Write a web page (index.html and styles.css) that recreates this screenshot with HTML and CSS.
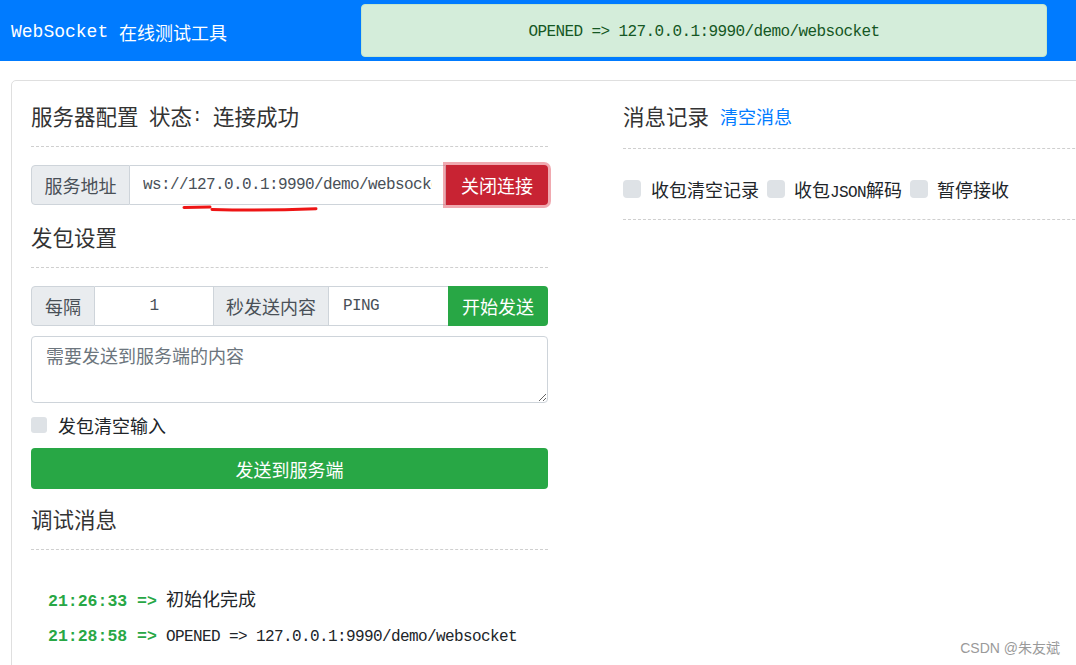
FILE: index.html
```html
<!DOCTYPE html>
<html lang="zh-CN">
<head>
<meta charset="utf-8">
<title>WebSocket 在线测试工具</title>
<link rel="stylesheet" href="styles.css">
</head>
<body>
<header class="topbar">
  <div class="brand"><span class="en">WebSocket </span>在线测试工具</div>
  <div class="alert"><span class="en">OPENED =&gt; 127.0.0.1:9990/demo/websocket</span></div>
</header>

<main class="card">
  <section class="col">
    <h5 class="sec-title">服务器配置<span class="hw"> </span>状态<span class="hw">: </span>连接成功</h5>
    <div class="group">
      <span class="addon w-addr">服务地址</span>
      <input class="field f-url" value="ws://127.0.0.1:9990/demo/websocket">
      <button class="btn btn-red">关闭连接</button>
    </div>

    <h5 class="sec-title">发包设置</h5>
    <div class="group">
      <span class="addon w-every">每隔</span>
      <input class="field f-num" value="1">
      <span class="addon w-sec">秒发送内容</span>
      <input class="field f-ping" value="PING">
      <button class="btn btn-green btn-start">开始发送</button>
    </div>
    <textarea class="msg" placeholder="需要发送到服务端的内容"></textarea>
    <div class="check-row">
      <span class="cb cb-sm"></span><span>发包清空输入</span>
    </div>
    <button class="btn btn-green btn-block">发送到服务端</button>

    <h5 class="sec-title sec-debug">调试消息</h5>
    <div class="log">
      <div class="log-line"><span class="en time">21:26:33 =&gt;</span><span class="en"> </span>初始化完成</div>
      <div class="log-line"><span class="en time">21:28:58 =&gt;</span><span class="en"> OPENED =&gt; 127.0.0.1:9990/demo/websocket</span></div>
    </div>
  </section>

  <section class="col">
    <h5 class="sec-title sec-right">消息记录<a class="link">清空消息</a></h5>
    <div class="checks">
      <span class="cb"></span><span class="lbl">收包清空记录</span>
      <span class="cb"></span><span class="lbl">收包<span class="en">JSON</span>解码</span>
      <span class="cb"></span><span class="lbl">暂停接收</span>
    </div>
  </section>
</main>

<svg class="annot" width="1076" height="665" viewBox="0 0 1076 665" aria-hidden="true">
  <path d="M184 207.5 L210 207" fill="none" stroke="#ee1515" stroke-width="3" stroke-linecap="round"/>
  <path d="M212 209.5 Q262 211 316 208.8" fill="none" stroke="#ee1515" stroke-width="3" stroke-linecap="round"/>
</svg>

<div class="watermark">CSDN @朱友斌</div>
</body>
</html>
```

FILE: styles.css
```css
* { box-sizing: border-box; }

html, body { margin: 0; padding: 0; }

body {
  width: 1076px;
  height: 665px;
  overflow: hidden;
  position: relative;
  background: #fff;
  color: #212529;
  font-family: "Noto Sans CJK SC", "Noto Sans", sans-serif;
  font-size: 18px;
}

.en {
  font-family: "Liberation Mono", "Noto Sans CJK SC", monospace;
  font-size: 16px;
  letter-spacing: -0.6px;
}

.hw {
  font-family: "Liberation Mono", monospace;
  font-size: 17.5px;
}

/* Header */
.topbar {
  display: flex;
  align-items: flex-start;
  height: 61px;
  padding-left: 11px;
  background: #007bff;
}

.brand {
  flex: 0 0 350px;
  height: 61px;
  display: flex;
  align-items: center;
  padding-top: 2px;
  color: #fff;
  font-size: 18px;
  white-space: pre;
}

.brand .en { font-size: 18px; letter-spacing: 0; }

.alert {
  margin-top: 4px;
  width: 686px;
  height: 53px;
  display: flex;
  align-items: center;
  justify-content: center;
  padding-top: 3px;
  background: #d4edda;
  border: 1px solid #c3e6cb;
  border-radius: 4px;
  color: #155724;
}

/* Card */
.card {
  display: grid;
  grid-template-columns: 517px 517px;
  column-gap: 75px;
  align-items: start;
  width: 1160px;
  margin: 19px 0 0 11px;
  padding: 20px 19px;
  border: 1px solid #dfdfdf;
  border-radius: 5px;
}

.sec-title {
  display: flex;
  align-items: center;
  height: 46px;
  margin: 0;
  padding-bottom: 15px;
  border-bottom: 1px dashed #cfcfcf;
  font-size: 21.5px;
  font-weight: 400;
  line-height: 30px;
  color: #333;
  white-space: pre;
}

.sec-right {
  height: 48px;
  padding-bottom: 17px;
}

.link {
  margin-left: 11px;
  font-size: 18px;
  color: #007bff;
}

/* Input groups */
.group {
  display: flex;
  height: 40px;
  margin-top: 18px;
}

.group ~ .sec-title { margin-top: 17px; }

.addon {
  display: flex;
  align-items: center;
  justify-content: center;
  height: 40px;
  background: #e9ecef;
  border: 1px solid #ced4da;
  color: #495057;
  font-size: 18px;
}

.addon:first-child { border-radius: 4px 0 0 4px; }

.w-addr { flex: 0 0 99px; }
.w-every { flex: 0 0 64px; }
.w-sec { flex: 0 0 116px; }

.field {
  height: 40px;
  margin: 0;
  padding: 0 13px;
  border: 1px solid #ced4da;
  border-left: 0;
  border-right: 0;
  border-radius: 0;
  background: #fff;
  color: #495057;
  font-family: "Liberation Mono", monospace;
  font-size: 16px;
  letter-spacing: -0.6px;
  outline: none;
  min-width: 0;
}

.f-url { flex: 0 0 316px; border-right: 1px solid #ced4da; }
.f-num { flex: 0 0 118px; text-align: center; }
.f-ping { flex: 0 0 119px; padding-left: 14px; }

.btn {
  margin: 0;
  border: 0;
  color: #fff;
  font-family: "Noto Sans CJK SC", sans-serif;
  font-size: 18px;
  cursor: pointer;
}

.btn-red {
  flex: 0 0 102px;
  position: relative;
  z-index: 1;
  background: #c82333;
  border-radius: 0 4px 4px 0;
  box-shadow: 0 0 0 3px rgba(225, 83, 97, 0.5);
}

.btn-green { background: #28a745; }

.btn-start {
  flex: 0 0 100px;
  border-radius: 0 4px 4px 0;
}

.msg {
  display: block;
  width: 100%;
  height: 67px;
  margin: 10px 0 0;
  padding: 5px 14px;
  border: 1px solid #ced4da;
  border-radius: 4px;
  font-family: "Noto Sans CJK SC", sans-serif;
  font-size: 18px;
  line-height: 27px;
  color: #495057;
  outline: none;
}

.msg::placeholder { color: #6c757d; }

.check-row {
  display: flex;
  align-items: center;
  height: 26px;
  margin-top: 9px;
}

.cb {
  flex: 0 0 18px;
  width: 18px;
  height: 18px;
  margin-right: 9px;
  border-radius: 4px;
  background: #dee2e6;
}

.cb-sm {
  flex-basis: 16px;
  width: 16px;
  height: 16px;
  margin-right: 11px;
  border-radius: 3px;
}

.btn-block {
  display: block;
  width: 100%;
  height: 41px;
  margin-top: 10px;
  border-radius: 4px;
}

.sec-title.sec-debug { margin-top: 15px; }

.log {
  padding: 31px 0 0 17px;
}

.log-line {
  height: 35px;
  line-height: 35px;
  white-space: pre;
  color: #212529;
}

.en.time {
  color: #28a745;
  font-weight: 700;
  font-size: 16.5px;
  letter-spacing: 0;
}

/* Right column */
.checks {
  display: flex;
  align-items: center;
  padding: 27px 0 17px;
  border-bottom: 1px dashed #cfcfcf;
}

.checks .cb:first-child { margin-right: 10px; }

.checks .lbl {
  height: 26px;
  line-height: 26px;
  margin-right: 8px;
}

/* Overlays */
.annot {
  position: absolute;
  left: 0;
  top: 0;
  pointer-events: none;
}

.watermark {
  position: absolute;
  right: 16px;
  bottom: 8px;
  font-family: "Liberation Sans", "Noto Sans CJK SC", sans-serif;
  font-size: 14px;
  color: #9a9a9a;
}
```
